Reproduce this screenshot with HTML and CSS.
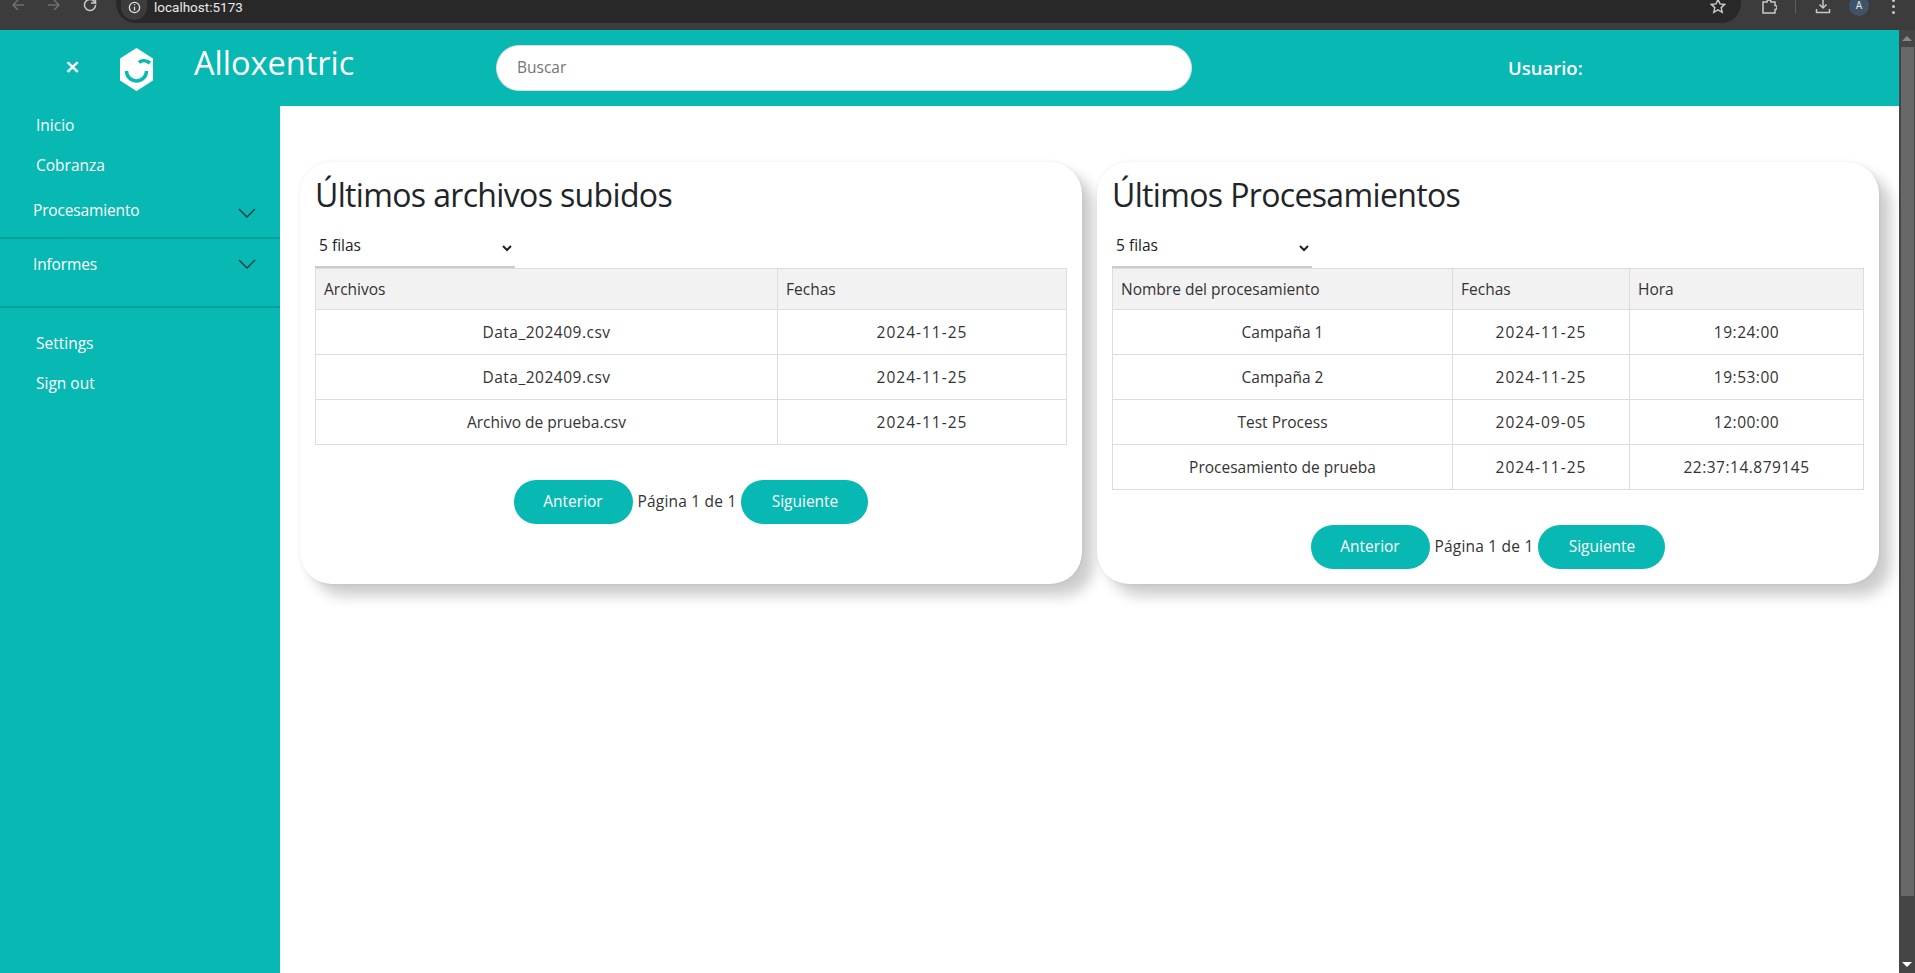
FILE: index.html
```html
<!DOCTYPE html>
<html lang="es">
<head>
    <meta charset="UTF-8">
    <meta name="viewport" content="width=device-width, initial-scale=1.0">
    <title>Alloxentric</title>
    <link rel="stylesheet" href="styles.css">
</head>
<body>
    <!-- Browser toolbar, cut at the top of the capture -->
    <div class="browser-bar">
        <div class="browser-nav">
            <svg class="browser-icon dim" viewBox="0 0 16 16"><path d="M14 8H3M8 3 3 8l5 5"/></svg>
            <svg class="browser-icon dim" viewBox="0 0 16 16"><path d="M2 8h11M8 3l5 5-5 5"/></svg>
            <svg class="browser-icon" viewBox="0 0 16 16"><path d="M13.5 8a5.500 5.500 0 1 1-1.600-3.900L13.500 6V1.500M13.500 6H9"/></svg>
        </div>
        <div class="address-bar">
            <span class="site-info">
                <svg viewBox="0 0 16 16"><circle cx="8" cy="8" r="5.500"/><path d="M8 7.200v4M8 4.500v1.200"/></svg>
            </span>
            <span class="address-text">localhost:5173</span>
            <svg class="browser-icon star" viewBox="0 0 16 16"><path d="m8 1.500 2 4.400 4.700.5-3.500 3.200 1 4.700L8 11.900l-4.200 2.400 1-4.700L1.300 6.400 6 5.900z"/></svg>
        </div>
        <div class="browser-actions">
            <svg class="browser-icon" viewBox="0 0 16 16"><path d="M2 3h4a2 2 0 0 1 4 0h4v3.500a2 2 0 0 1 0 4V14H2z"/></svg>
            <span class="browser-divider"></span>
            <svg class="browser-icon" viewBox="0 0 16 16"><path d="M8 0v9M4.500 5.500 8 9l3.500-3.500M1.500 10v3.500h13V10"/></svg>
            <span class="avatar">A</span>
            <span class="kebab"><i></i><i></i><i></i></span>
        </div>
    </div>

    <div class="viewport">
        <div class="app">
            <header class="topbar">
                <div class="brand">
                    <span class="close-btn">×</span>
                    <svg class="logo" viewBox="0 0 33 43">
                        <path class="logo-hex" d="M16.500 1 32 11v21L16.500 42 1 32V11z"/>
                        <path class="logo-line" d="M6.500 23a10 10 0 0 0 20 0M19 14.500c2.500-2.500 7-2.500 11 .5"/>
                    </svg>
                    <span class="brand-name">Alloxentric</span>
                </div>
                <input class="search" type="text" placeholder="Buscar">
                <span class="user-label">Usuario:</span>
            </header>

            <div class="layout">
                <aside class="sidebar">
                    <nav class="side-group">
                        <a class="side-link" href="#">Inicio</a>
                        <a class="side-link" href="#">Cobranza</a>
                    </nav>
                    <div class="side-section first">
                        <span>Procesamiento</span>
                        <svg class="chevron" viewBox="0 0 18 10"><path d="m1 1 8 8 8-8"/></svg>
                    </div>
                    <div class="side-section second">
                        <span>Informes</span>
                        <svg class="chevron" viewBox="0 0 18 10"><path d="m1 1 8 8 8-8"/></svg>
                    </div>
                    <nav class="side-group bottom">
                        <a class="side-link" href="#">Settings</a>
                        <a class="side-link" href="#">Sign out</a>
                    </nav>
                </aside>

                <main class="content">
                    <section class="card">
                        <h2>Últimos archivos subidos</h2>
                        <select class="rows-select"><option>5 filas</option></select>
                        <table class="data-table files">
                            <colgroup><col class="col-name"><col></colgroup>
                            <thead>
                                <tr><th>Archivos</th><th>Fechas</th></tr>
                            </thead>
                            <tbody>
                                <tr><td class="digits">Data_202409.csv</td><td class="date">2024-11-25</td></tr>
                                <tr><td class="digits">Data_202409.csv</td><td class="date">2024-11-25</td></tr>
                                <tr><td>Archivo de prueba.csv</td><td class="date">2024-11-25</td></tr>
                            </tbody>
                        </table>
                        <div class="pager">
                            <button class="pager-btn prev">Anterior</button>
                            <span class="pager-text">Página 1 de 1</span>
                            <button class="pager-btn next">Siguiente</button>
                        </div>
                    </section>

                    <section class="card">
                        <h2>Últimos Procesamientos</h2>
                        <select class="rows-select"><option>5 filas</option></select>
                        <table class="data-table runs">
                            <colgroup><col class="col-name"><col class="col-date"><col></colgroup>
                            <thead>
                                <tr><th>Nombre del procesamiento</th><th>Fechas</th><th>Hora</th></tr>
                            </thead>
                            <tbody>
                                <tr><td>Campaña 1</td><td class="date">2024-11-25</td><td class="digits">19:24:00</td></tr>
                                <tr><td>Campaña 2</td><td class="date">2024-11-25</td><td class="digits">19:53:00</td></tr>
                                <tr><td>Test Process</td><td class="date">2024-09-05</td><td class="digits">12:00:00</td></tr>
                                <tr><td>Procesamiento de prueba</td><td class="date">2024-11-25</td><td class="digits">22:37:14.879145</td></tr>
                            </tbody>
                        </table>
                        <div class="pager">
                            <button class="pager-btn prev">Anterior</button>
                            <span class="pager-text">Página 1 de 1</span>
                            <button class="pager-btn next">Siguiente</button>
                        </div>
                    </section>
                </main>
            </div>
        </div>

        <div class="scrollbar">
            <span class="arrow up"></span>
            <span class="thumb"></span>
            <span class="arrow down"></span>
        </div>
    </div>
</body>
</html>
```

FILE: styles.css
```css
/* Page */
html, body {
    height: 100%;
}

body {
    margin: 0;
    overflow: hidden;
    display: flex;
    flex-direction: column;
    font-family: "Open Sans", "Noto Sans", sans-serif;
    font-size: 15.5px;
    color: #333;
    background-color: #fff;
}

/* Browser toolbar */
.browser-bar {
    height: 30px;
    flex: none;
    display: flex;
    align-items: flex-start;
    background-color: #3c3c3c;
    overflow: hidden;
}

.browser-nav {
    width: 116px;
    flex: none;
    display: flex;
    gap: 20px;
    padding-left: 10px;
    box-sizing: border-box;
}

.browser-icon {
    width: 16px;
    height: 16px;
    margin-top: -3px;
    fill: none;
    stroke: #c7c7c7;
    stroke-width: 1.5;
}

.browser-icon.dim {
    stroke: #6e6e6e;
}

.address-bar {
    width: 1625px;
    height: 23px;
    flex: none;
    display: flex;
    align-items: flex-start;
    background-color: #282828;
    border-radius: 0 0 20px 20px;
    color: #e8e8e8;
}

.site-info {
    width: 26px;
    height: 20px;
    margin: 0 7px 0 5px;
    border-radius: 0 0 13px 13px;
    background-color: #3c3c3c;
    display: flex;
    justify-content: center;
}

.site-info svg {
    width: 15px;
    height: 15px;
    fill: none;
    stroke: #e0e0e0;
    stroke-width: 1.400;
}

.address-text {
    flex: 1;
    font-family: "Roboto", sans-serif;
    font-size: 13.500px;
    line-height: 14px;
}

.star {
    margin: -2px 15px 0 0;
}

.browser-actions {
    flex: 1;
    display: flex;
    align-items: flex-start;
    padding-left: 20px;
}

.browser-actions .browser-icon {
    margin-top: -1px;
}

.browser-divider {
    width: 1px;
    height: 14px;
    margin: 0 19px 0 18px;
    background-color: #5e5e5e;
}

.avatar {
    width: 20px;
    height: 20px;
    margin: -4px 0 0 18px;
    border-radius: 50%;
    background-color: #3f5468;
    color: #eee;
    font-family: "Roboto", sans-serif;
    font-size: 10px;
    line-height: 20px;
    text-align: center;
}

.kebab {
    display: flex;
    flex-direction: column;
    gap: 3px;
    margin: -1px 0 0 23px;
}

.kebab i {
    width: 3px;
    height: 3px;
    border-radius: 50%;
    background-color: #c7c7c7;
}

/* Everything under the toolbar */
.viewport {
    flex: 1;
    min-height: 0;
    display: flex;
}

.app {
    flex: 1;
    min-width: 0;
    display: flex;
    flex-direction: column;
}

.scrollbar {
    width: 16px;
    flex: none;
    display: flex;
    flex-direction: column;
    align-items: center;
    background-color: #454545;
}

.scrollbar .thumb {
    flex: 1;
    width: 13px;
    background-color: #686868;
    margin-bottom: 66px;
}

.arrow {
    flex: none;
    width: 0;
    height: 0;
    border-left: 5px solid transparent;
    border-right: 5px solid transparent;
}

.arrow.up {
    margin: 6px 0 6px;
    border-bottom: 5px solid #8a8a8a;
}

.arrow.down {
    margin-bottom: 6px;
    border-top: 5px solid #fff;
}

/* Top bar */
.topbar {
    height: 76px;
    flex: none;
    display: flex;
    align-items: center;
    background-color: #08b8b2;
    color: #fff;
}

.brand {
    width: 496px;
    flex: none;
    display: flex;
    align-items: center;
}

.close-btn {
    width: 120px;
    padding-left: 65px;
    box-sizing: border-box;
    font-size: 26px;
    font-weight: 600;
    line-height: 26px;
    margin-top: -5px;
}

.logo {
    width: 33px;
    height: 43px;
    flex: none;
    margin-top: 3px;
}

.logo-hex {
    fill: #fff;
    stroke: #fff;
    stroke-width: 2;
    stroke-linejoin: round;
}

.logo-line {
    fill: none;
    stroke: #08b8b2;
    stroke-width: 3.500;
}

.brand-name {
    margin: -11px 0 0 41px;
    font-size: 32.500px;
    font-weight: 500;
}

.search {
    width: 696px;
    height: 46px;
    flex: none;
    box-sizing: border-box;
    padding: 0 20px 2px;
    border: 1px solid #ddd;
    border-radius: 23px;
    background-color: #fff;
    font: inherit;
    outline: none;
}

.search::placeholder {
    color: #757575;
}

.user-label {
    margin: -2px 0 0 316px;
    font-size: 18.500px;
    font-weight: 600;
}

/* Sidebar */
.layout {
    flex: 1;
    min-height: 0;
    display: flex;
}

.sidebar {
    width: 280px;
    flex: none;
    background-color: #08b8b2;
    color: #fff;
}

.side-group {
    display: flex;
    flex-direction: column;
    gap: 18px;
    padding: 8px 36px 0;
}

.side-link {
    color: #fff;
    text-decoration: none;
    line-height: 22px;
}

.side-section {
    display: flex;
    justify-content: space-between;
    align-items: center;
    padding: 0 24px 0 33px;
    border-bottom: 2px solid #07a19c;
    letter-spacing: -0.150px;
}

.side-section.first {
    height: 58px;
    margin-top: 5px;
    padding-top: 2px;
    box-sizing: border-box;
}

.side-section.second {
    height: 69px;
    align-items: flex-start;
    padding-top: 14px;
    box-sizing: border-box;
}

.chevron {
    width: 18px;
    height: 10px;
    margin-top: 5px;
    fill: none;
    stroke: #20393d;
    stroke-width: 1.400;
}

.side-section.second .chevron {
    margin-top: 6px;
}

.side-group.bottom {
    padding-top: 24px;
}

/* Main area */
.content {
    flex: 1;
    min-width: 0;
    display: flex;
    align-items: flex-start;
    gap: 15px;
    padding: 56px 20px 0;
}

.card {
    flex: 1;
    min-width: 0;
    height: 422px;
    box-sizing: border-box;
    padding: 13px 15px 15px;
    border-radius: 32px;
    background-color: #fff;
    box-shadow: 12px 12px 14px rgba(0, 0, 0, 0.2), 0 0 4px rgba(0, 0, 0, 0.08);
}

.card h2 {
    margin: 0;
    height: 53px;
    font-size: 32px;
    font-weight: 400;
    letter-spacing: -0.650px;
    line-height: 40px;
    color: #212529;
}

.rows-select {
    display: block;
    width: 200px;
    height: 40px;
    padding: 0 0 5px;
    border: none;
    border-bottom: 2px solid #ccc;
    background-color: #fff;
    font: inherit;
    color: #222;
    outline: none;
}

/* Tables */
.data-table {
    width: 100%;
    table-layout: fixed;
    border-collapse: collapse;
}

.data-table th,
.data-table td {
    border: 1px solid #ddd;
    padding: 0 8px 1px;
}

.data-table th {
    height: 39px;
    background-color: #f2f2f2;
    font-weight: 400;
    text-align: left;
}

.data-table td {
    height: 43px;
    text-align: center;
}

.data-table .digits {
    letter-spacing: 0.500px;
}

.data-table .date {
    letter-spacing: 1px;
}

.files .col-name {
    width: 462px;
}

.runs .col-name {
    width: 340px;
}

.runs .col-date {
    width: 177px;
}

/* Pagination */
.pager {
    display: flex;
    justify-content: center;
    align-items: center;
    gap: 5px;
    margin-top: 35px;
}

.pager-text {
    letter-spacing: 0.200px;
    padding-bottom: 2px;
}

.pager-btn {
    height: 44px;
    padding: 0 0 2px;
    border: none;
    border-radius: 22px;
    background-color: #08b8b2;
    color: #fff;
    font: inherit;
}

.pager-btn.prev {
    width: 119px;
}

.pager-btn.next {
    width: 127px;
}
```
